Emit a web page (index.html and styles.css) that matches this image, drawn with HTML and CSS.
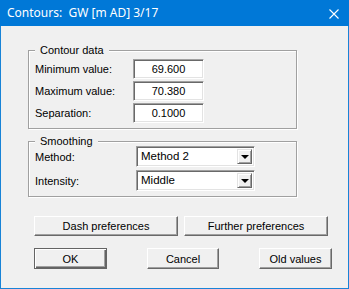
FILE: index.html
```html
<!DOCTYPE html>
<html lang="en">
<head>
    <meta charset="UTF-8">
    <title>Contours</title>
    <link rel="stylesheet" href="styles.css">
</head>
<body>
    <div class="window">
        <div class="titlebar">
            <span class="title">Contours:&nbsp; GW [m AD] 3/17</span>
            <svg class="close" width="10" height="10" viewBox="0 0 10 10">
                <path d="M0.5 0.5 L9.5 9.5 M9.5 0.5 L0.5 9.5" stroke="#fff" stroke-width="1.1" fill="none"/>
            </svg>
        </div>

        <div class="content">
            <!-- Contour data -->
            <div class="group">
                <span class="group-title">Contour data</span>
                <div class="rows rows-data">
                    <div class="row">
                        <span class="label">Minimum value:</span>
                        <span class="field">69.600</span>
                    </div>
                    <div class="row">
                        <span class="label">Maximum value:</span>
                        <span class="field">70.380</span>
                    </div>
                    <div class="row">
                        <span class="label">Separation:</span>
                        <span class="field">0.1000</span>
                    </div>
                </div>
            </div>

            <!-- Smoothing -->
            <div class="group group-smooth">
                <span class="group-title">Smoothing</span>
                <div class="rows rows-smooth">
                    <div class="row">
                        <span class="label">Method:</span>
                        <span class="combo">
                            <span class="combo-text">Method 2</span>
                            <span class="combo-btn"><span class="arrow"></span></span>
                        </span>
                    </div>
                    <div class="row">
                        <span class="label">Intensity:</span>
                        <span class="combo">
                            <span class="combo-text">Middle</span>
                            <span class="combo-btn"><span class="arrow"></span></span>
                        </span>
                    </div>
                </div>
            </div>

            <div class="buttons-top">
                <button class="btn btn-wide">Dash preferences</button>
                <button class="btn btn-wide">Further preferences</button>
            </div>

            <div class="buttons-bottom">
                <button class="btn btn-default">OK</button>
                <button class="btn btn-cancel">Cancel</button>
                <button class="btn btn-old">Old values</button>
            </div>
        </div>
    </div>
</body>
</html>
```

FILE: styles.css
```css
* {
    box-sizing: border-box;
}
body {
    margin: 0;
    font-family: "Liberation Sans", Arial, sans-serif;
    font-size: 11px;
    color: #000;
    background: #f0f0f0;
}
.window {
    width: 349px;
    height: 289px;
    background-color: #f0f0f0;
    border: 1px solid #1883d7;
    border-top: none;
    display: flex;
    flex-direction: column;
}
.titlebar {
    height: 26px;
    margin: 0 -1px;
    background-color: #0078d7;
    color: #fff;
    display: flex;
    align-items: center;
    justify-content: space-between;
    padding: 0 10px 0 7px;
}
.title {
    font-family: "Noto Sans", "Open Sans", sans-serif;
    font-size: 12px;
    line-height: 16px;
}
.close {
    display: block;
    margin-top: 1px;
}
.content {
    padding: 24px 0 0 27px;
}
.group {
    width: 269px;
    border: 1px solid #a0a0a0;
    box-shadow: inset 1px 1px 0 #fff, 1px 1px 0 #fff;
    padding: 0 6px;
    display: flex;
    flex-direction: column;
}
.group-title {
    align-self: flex-start;
    height: 14px;
    line-height: 14px;
    margin: -8px 0 0 0;
    padding: 0 5px;
    background-color: #f0f0f0;
}
.group-smooth {
    margin-top: 12px;
}
.rows {
    display: flex;
    flex-direction: column;
}
.rows-data {
    margin-top: 2px;
    gap: 2px;
    padding-bottom: 5px;
}
.rows-smooth {
    margin-top: -2px;
    gap: 3px;
    padding-bottom: 5px;
}
.row {
    display: flex;
    align-items: center;
}
.rows-data .label {
    width: 98px;
}
.rows-smooth .label {
    width: 101px;
}
.field {
    width: 71px;
    height: 20px;
    background-color: #fff;
    border: 1px solid;
    border-color: #a0a0a0 #fff #fff #a0a0a0;
    box-shadow: inset 1px 1px 0 #696969, inset -1px -1px 0 #e3e3e3;
    text-align: center;
    line-height: 18px;
}
.combo {
    width: 119px;
    height: 21px;
    background-color: #fff;
    border: 1px solid;
    border-color: #a0a0a0 #fff #fff #a0a0a0;
    box-shadow: inset 1px 1px 0 #696969, inset -1px -1px 0 #e3e3e3;
    display: flex;
    align-items: center;
    padding: 2px 2px 2px 4px;
}
.combo-text {
    flex: 1;
    font-size: 11.5px;
    line-height: 15px;
}
.combo-btn {
    width: 15px;
    height: 15px;
    background-color: #f0f0f0;
    border: 1px solid;
    border-color: #e3e3e3 #696969 #696969 #e3e3e3;
    box-shadow: inset 1px 1px 0 #fff, inset -1px -1px 0 #a0a0a0;
    display: flex;
    align-items: center;
    justify-content: center;
}
.arrow {
    width: 0;
    height: 0;
    border-left: 4px solid transparent;
    border-right: 4px solid transparent;
    border-top: 4px solid #000;
    margin-top: 1px;
}
.btn {
    font-family: inherit;
    font-size: 11px;
    color: #000;
    background-color: #f0f0f0;
    border: 1px solid;
    border-color: #fff #696969 #696969 #fff;
    box-shadow: inset -1px -1px 0 #a0a0a0;
    padding: 0;
    margin: 0;
}
.buttons-top {
    display: flex;
    gap: 6px;
    margin: 19px 0 0 6px;
}
.btn-wide {
    width: 144px;
    height: 20px;
}
.buttons-bottom {
    display: flex;
    margin: 12px 0 0 6px;
}
.buttons-bottom .btn {
    height: 21px;
}
.btn-default {
    width: 73px;
    border: 1px solid #646464;
    box-shadow: inset 1px 1px 0 #fff, inset -1px -1px 0 #646464, inset -2px -2px 0 #a0a0a0;
}
.btn-cancel {
    width: 72px;
    margin-left: 40px;
}
.btn-old {
    width: 73px;
    margin-left: 40px;
}
```
